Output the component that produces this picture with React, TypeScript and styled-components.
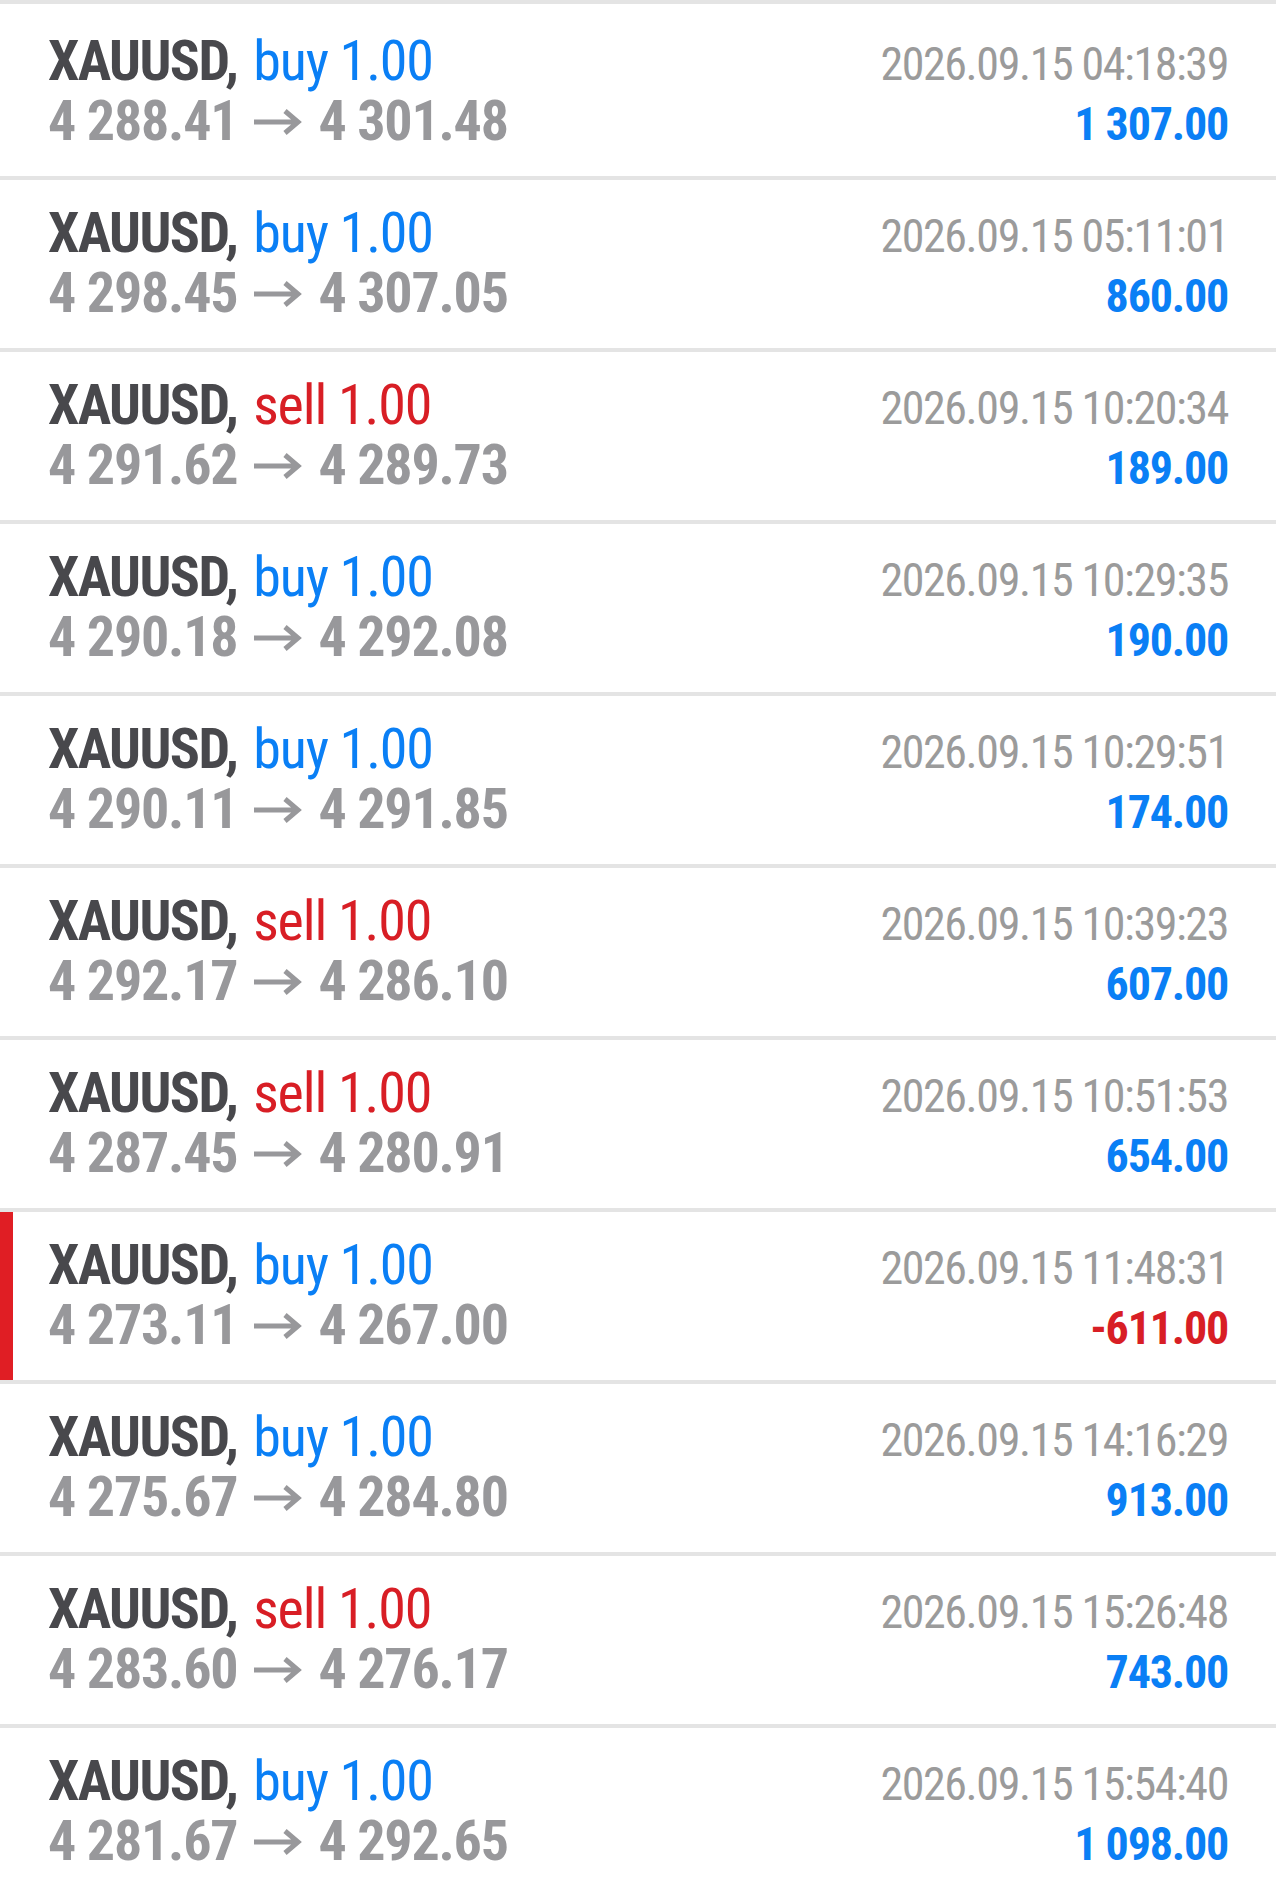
import React from "react";
import styled, { createGlobalStyle } from "styled-components";

const GlobalStyle = createGlobalStyle`
  html, body {
    margin: 0;
    padding: 0;
    background: #ffffff;
  }
  body {
    font-family: "Roboto Condensed", Roboto, "Liberation Sans", sans-serif;
    font-stretch: 75%;
    -webkit-font-smoothing: antialiased;
  }
`;

type Side = "buy" | "sell";

interface Deal {
  side: Side;
  open: string;
  close: string;
  time: string;
  profit: string;
  flagged?: boolean;
}

const deals: Deal[] = [
  { side: "buy", open: "4 288.41", close: "4 301.48", time: "2026.09.15 04:18:39", profit: "1 307.00" },
  { side: "buy", open: "4 298.45", close: "4 307.05", time: "2026.09.15 05:11:01", profit: "860.00" },
  { side: "sell", open: "4 291.62", close: "4 289.73", time: "2026.09.15 10:20:34", profit: "189.00" },
  { side: "buy", open: "4 290.18", close: "4 292.08", time: "2026.09.15 10:29:35", profit: "190.00" },
  { side: "buy", open: "4 290.11", close: "4 291.85", time: "2026.09.15 10:29:51", profit: "174.00" },
  { side: "sell", open: "4 292.17", close: "4 286.10", time: "2026.09.15 10:39:23", profit: "607.00" },
  { side: "sell", open: "4 287.45", close: "4 280.91", time: "2026.09.15 10:51:53", profit: "654.00" },
  { side: "buy", open: "4 273.11", close: "4 267.00", time: "2026.09.15 11:48:31", profit: "-611.00", flagged: true },
  { side: "buy", open: "4 275.67", close: "4 284.80", time: "2026.09.15 14:16:29", profit: "913.00" },
  { side: "sell", open: "4 283.60", close: "4 276.17", time: "2026.09.15 15:26:48", profit: "743.00" },
  { side: "buy", open: "4 281.67", close: "4 292.65", time: "2026.09.15 15:54:40", profit: "1 098.00" },
];

const List = styled.div`
  border-top: 4px solid #e4e4e4;
  padding-top: 4px;
  display: flex;
  flex-direction: column;
`;

const Row = styled.div<{ $flagged?: boolean }>`
  position: relative;
  box-sizing: border-box;
  height: 172px;
  border-bottom: 4px solid #e4e4e4;
  padding: 23px 48px 0 48px;
  display: grid;
  grid-template-columns: 1fr auto;
  grid-template-rows: 60px 60px;
  align-items: baseline;
  &::before {
    content: "";
    display: ${(p) => (p.$flagged ? "block" : "none")};
    position: absolute;
    left: 0;
    top: 0;
    bottom: 0;
    width: 13px;
    background: #e01e24;
  }
`;

const Title = styled.div`
  font-size: 56px;
  line-height: 60px;
  white-space: nowrap;
`;

const Symbol = styled.span`
  color: #48484c;
  font-weight: 700;
  letter-spacing: -1.6px;
`;

const Action = styled.span<{ $side: Side }>`
  color: ${(p) => (p.$side === "buy" ? "#0a7ff5" : "#d81e25")};
  font-weight: 400;
  letter-spacing: -1.1px;
  margin-left: 3px;
`;

const Prices = styled.div`
  display: flex;
  align-items: center;
  gap: 16px;
  font-size: 56px;
  line-height: 60px;
  font-weight: 700;
  color: #98989b;
  letter-spacing: -1.2px;
  white-space: nowrap;
`;

const ArrowIcon = styled.svg`
  flex: none;
  width: 49px;
  height: 26px;
  margin-top: 2px;
`;

const Arrow = () => (
  <ArrowIcon viewBox="0 0 49 26" aria-hidden="true">
    <path
      d="M1 13 H45 M32 2 L45 13 L32 24"
      fill="none"
      stroke="#98989b"
      strokeWidth="5"
      strokeLinejoin="miter"
    />
  </ArrowIcon>
);

const Time = styled.div`
  font-size: 46px;
  line-height: 60px;
  color: #9b9b9b;
  letter-spacing: -1.4px;
  text-align: right;
  white-space: nowrap;
`;

const Profit = styled.div<{ $negative: boolean }>`
  font-size: 46px;
  line-height: 60px;
  font-weight: 700;
  letter-spacing: -1.2px;
  color: ${(p) => (p.$negative ? "#d81e25" : "#0a7ff5")};
  text-align: right;
  white-space: nowrap;
`;

export default function App() {
  return (
    <>
      <GlobalStyle />
      <List>
        {deals.map((d, i) => (
          <Row key={i} $flagged={d.flagged}>
            <Title>
              <Symbol>XAUUSD,</Symbol> <Action $side={d.side}>{d.side} 1.00</Action>
            </Title>
            <Time>{d.time}</Time>
            <Prices>
              <span>{d.open}</span>
              <Arrow />
              <span>{d.close}</span>
            </Prices>
            <Profit $negative={d.profit.startsWith("-")}>{d.profit}</Profit>
          </Row>
        ))}
      </List>
    </>
  );
}
